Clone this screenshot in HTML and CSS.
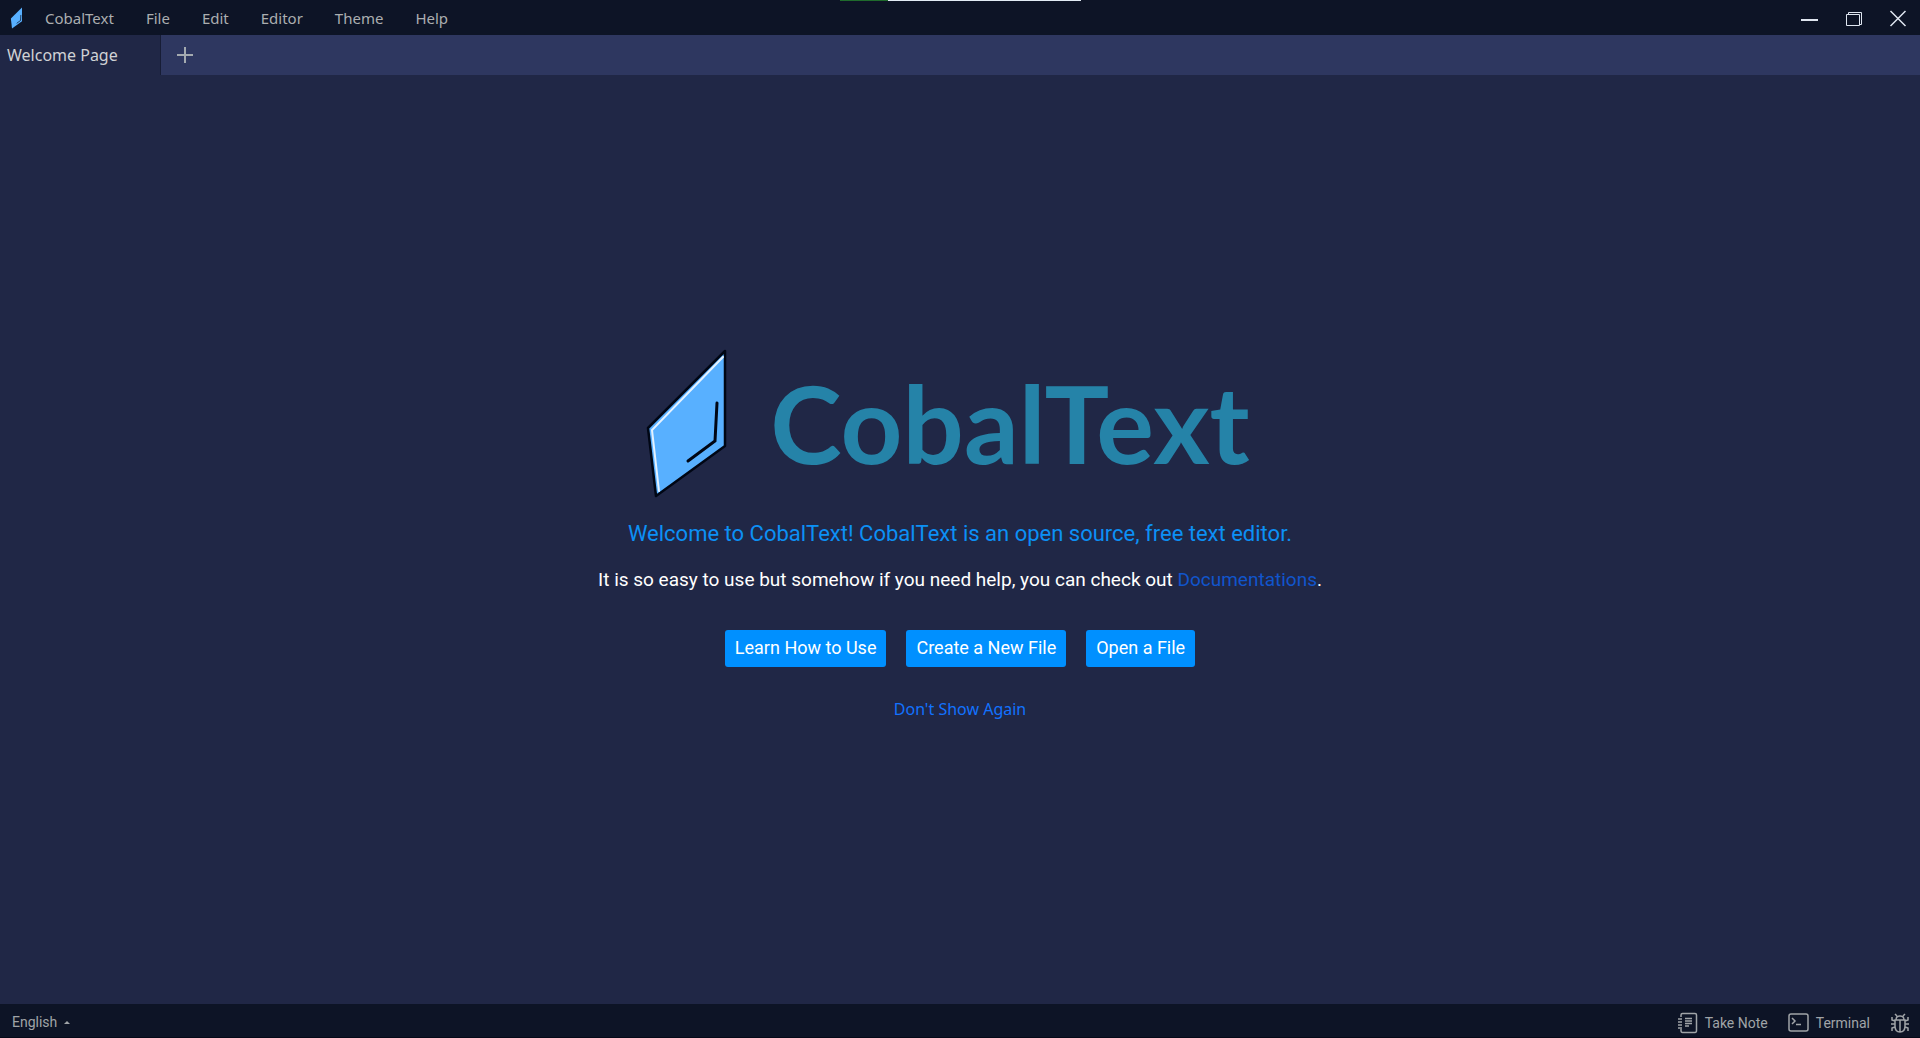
FILE: index.html
```html
<!DOCTYPE html>
<html lang="en">
<head>
    <meta charset="UTF-8">
    <title>CobalText</title>
    <meta name="viewport" content="width=device-width, initial-scale=1.0">
    <link rel="stylesheet" href="styles.css">
</head>
<body>

    <!-- Title bar -->
    <header class="titlebar">
        <div class="progress"></div>
        <svg class="app-icon" viewBox="0 0 86 152" aria-hidden="true">
            <path d="M81 3V98L12 148L4 80Z" fill="#58b0ff"/>
            <path d="M73 55L71 93L44 113" fill="none" stroke="#0d1426" stroke-width="5"/>
        </svg>
        <nav class="menu">
            <button>CobalText</button>
            <button>File</button>
            <button>Edit</button>
            <button>Editor</button>
            <button>Theme</button>
            <button>Help</button>
        </nav>
        <div class="window-buttons">
            <button aria-label="Minimize">
                <svg width="18" height="18" viewBox="0 0 18 18"><path d="M0 11H17" stroke-width="2"/></svg>
            </button>
            <button aria-label="Restore">
                <svg width="18" height="18" viewBox="0 0 18 18"><path d="M1.500 5.500H14.500V16.500H1.500ZM3.500 5.500V3.500H16.500V15.500H14.500"/></svg>
            </button>
            <button aria-label="Close">
                <svg width="18" height="18" viewBox="0 0 18 18"><path d="M1.500 2L16.500 17M16.500 2L1.500 17" stroke-width="1.500"/></svg>
            </button>
        </div>
    </header>

    <!-- Tabs -->
    <div class="tabs">
        <button class="tab">Welcome Page</button>
        <button class="new-tab" aria-label="New tab">
            <svg width="16" height="16" viewBox="0 0 16 16"><path d="M0 8H16M8 0V16"/></svg>
        </button>
    </div>

    <!-- Welcome page -->
    <main class="welcome">
        <div class="brand">
            <svg class="logo" viewBox="0 0 86 152" aria-hidden="true">
                <path d="M81 3V98L12 148L4 80Z" fill="#58b0ff" stroke="#000614" stroke-width="2.500" stroke-linejoin="round"/>
                <path d="M79 9L8 82L15 143" fill="none" stroke="#e4f2ff" stroke-width="2" stroke-linecap="round"/>
                <path d="M73 55L71 93L44 113" fill="none" stroke="#000614" stroke-width="3" stroke-linecap="round"/>
            </svg>
            <h1>CobalText</h1>
        </div>
        <p class="intro">Welcome to CobalText! CobalText is an open source, free text editor.</p>
        <p class="help">It is so easy to use but somehow if you need help, you can check out <a href="#docs">Documentations</a>.</p>
        <div class="actions">
            <button>Learn How to Use</button>
            <button>Create a New File</button>
            <button>Open a File</button>
        </div>
        <a class="dismiss" href="#dismiss">Don't Show Again</a>
    </main>

    <!-- Status bar -->
    <footer class="statusbar">
        <button class="language">English <span class="caret"></span></button>
        <div class="tools">
            <button>
                <svg width="20" height="22" viewBox="0 0 20 22">
                    <path d="M3 5V3Q3 1.500 4.500 1.500H17Q18.500 1.500 18.500 3V18.500Q18.500 20.500 17 20.500H4.500Q3 20.500 3 18.500V17M0 7H4M0 10H4M0 13H4M0 16H4"/>
                    <path d="M7 6.500H14M7 9H14M7 11.500H14M7 14H11"/>
                </svg>
                Take Note
            </button>
            <button>
                <svg width="21" height="20" viewBox="0 0 21 20">
                    <rect x="1" y="1" width="19" height="17" rx="2"/>
                    <path d="M4 5L7 8L4 11M8 11.500H13"/>
                </svg>
                Terminal
            </button>
            <button aria-label="Report a bug">
                <svg width="20" height="20" viewBox="0 0 20 20">
                    <path d="M5 7H15V13Q15 19 10 19Q5 19 5 13ZM6 7Q6 3 10 3Q14 3 14 7M10 7V19M7 3L5 1M13 3L15 1M5 8L2 7V4M15 8L18 7V4M5 11H1M15 11H19M5 14L2 15V18M15 14L18 15V18"/>
                </svg>
            </button>
        </div>
    </footer>

</body>
</html>
```
FILE: styles.css
```css
* {
    box-sizing: border-box;
}
body {
    margin: 0;
    min-height: 100vh;
    display: flex;
    flex-direction: column;
    background-color: #202746;
    font-family: Roboto, sans-serif;
}
button {
    margin: 0;
    padding: 0;
    border: none;
    background: none;
    color: inherit;
    font: inherit;
    cursor: pointer;
}
svg {
    display: block;
    flex: none;
}
a {
    text-decoration: none;
}

/* Title bar */
.titlebar {
    position: relative;
    display: flex;
    align-items: center;
    height: 35px;
    padding-left: 9px;
    background-color: #0d1426;
}
.progress {
    position: absolute;
    top: 0;
    left: 840px;
    width: 241px;
    height: 1px;
    background: linear-gradient(to right, #1f6b2c 20%, #e2ecf5 20%);
}
.app-icon {
    width: 15px;
    height: 22px;
}
.menu {
    display: flex;
    margin-left: 5px;
    color: #abaeb0;
    font-family: "Noto Sans", sans-serif;
    font-size: 15px;
}
.menu button {
    height: 35px;
    padding: 0 16px;
}
.window-buttons {
    display: flex;
    margin-left: auto;
    color: #dfe6f0;
}
.window-buttons button {
    width: 44px;
    height: 35px;
    display: flex;
    align-items: center;
    justify-content: center;
}
.window-buttons path, .new-tab path {
    fill: none;
    stroke: currentColor;
}

/* Tabs */
.tabs {
    display: flex;
    height: 40px;
    background-color: #2e3760;
}
.tab {
    width: 161px;
    padding-left: 7px;
    border-right: 1px solid #171d36;
    background-color: #202746;
    color: #d0d2d5;
    font-family: "Noto Sans", sans-serif;
    font-size: 16px;
    text-align: left;
}
.new-tab {
    width: 48px;
    display: flex;
    align-items: center;
    justify-content: center;
    color: #a4aab0;
}
.new-tab path {
    stroke-width: 2;
}

/* Welcome page */
.welcome {
    flex: 1;
    display: flex;
    flex-direction: column;
    align-items: center;
    justify-content: center;
    padding-bottom: 10px;
    text-align: center;
}
.brand {
    display: flex;
    align-items: center;
    gap: 40px;
    padding-right: 26px;
}
.logo {
    width: 86px;
    height: 152px;
}
h1 {
    margin: 0;
    padding-bottom: 4px;
    color: #2583a8;
    font-family: Lato, sans-serif;
    font-size: 108px;
    font-weight: bold;
    line-height: 148px;
}
p {
    margin: 0;
}
.intro {
    margin-top: 18px;
    color: #0c90f5;
    font-size: 22px;
    line-height: 32px;
}
.help {
    margin-top: 16px;
    color: #fff;
    font-size: 19px;
    line-height: 28px;
}
.help a {
    color: #1155cc;
}
.actions {
    display: flex;
    gap: 20px;
    margin-top: 36px;
}
.actions button {
    height: 37px;
    padding: 0 10px 2px;
    border-radius: 3px;
    background-color: #0090ff;
    color: #fff;
    font-size: 18px;
}
.dismiss {
    margin-top: 30px;
    color: #1272ff;
    font-family: "Noto Sans", sans-serif;
    font-size: 16px;
    line-height: 24px;
}

/* Status bar */
.statusbar {
    display: flex;
    align-items: center;
    justify-content: space-between;
    height: 34px;
    padding: 3px 10px 0 12px;
    border-bottom: 1px solid #050918;
    background-color: #0d1426;
    color: #a0a4a8;
    font-size: 14px;
}
.statusbar button {
    display: flex;
    align-items: center;
    gap: 7px;
}
.caret {
    border: 3px solid transparent;
    border-top: none;
    border-bottom: 3px solid #a0a4a8;
}
.tools {
    display: flex;
    gap: 20px;
    padding-top: 1px;
}
.tools svg {
    fill: none;
    stroke: currentColor;
    stroke-width: 1.5px;
}
```
